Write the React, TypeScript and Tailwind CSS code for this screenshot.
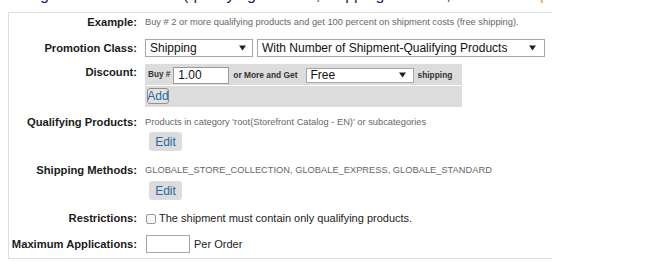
import React from "react";

function Arrow() {
  return (
    <svg width="7" height="6" viewBox="0 0 7 6" className="shrink-0">
      <path d="M0 0.5 L7 0.5 L3.5 5.5 Z" fill="#222" />
    </svg>
  );
}

function FakeSelect({ w, h, text, arrowPad }: { w: string; h: string; text: string; arrowPad: string }) {
  return (
    <div
      className={`${w} ${h} ${arrowPad} flex items-center justify-between border border-[#a6a6a6] bg-white pl-[4px] text-[12px] leading-none text-[#111]`}
    >
      <span>{text}</span>
      <Arrow />
    </div>
  );
}

function Label({ children, extra = "" }: { children: React.ReactNode; extra?: string }) {
  return (
    <div className={`w-[128px] shrink-0 text-right text-[11.2px] font-bold leading-[13px] text-[#1a1a1a] ${extra}`}>
      {children}
    </div>
  );
}

function EditButton() {
  return (
    <div className="ml-[4px] flex h-[19px] w-[33px] items-center justify-center rounded-[3px] bg-[#dcdcdc] text-[12px] leading-none text-[#2b69a3]">
      Edit
    </div>
  );
}

export default function App() {
  return (
    <div className="h-[271px] w-[652px] overflow-hidden bg-white font-['Liberation_Sans',Arial,sans-serif]">
      {/* clipped line from above */}
      <div className="h-[6px] overflow-hidden">
        <div className="-mt-[13px] flex whitespace-nowrap text-[16px] leading-[16px] text-[#1b2a66]">
          <span className="ml-[8px]">Using</span>
          <span className="ml-[134px]">(qualifying</span>
          <span className="ml-[60px]">, shipping</span>
          <span className="ml-[62px]">,</span>
          <span className="ml-[89px] text-[#e39a2d]">|</span>
        </div>
      </div>

      <div className="ml-[8px] mt-[6px] w-[544px] border-b border-l border-t border-[#dddddd] pb-[5px]">
        {/* Example */}
        <div className="flex h-[19px] items-center">
          <Label>Example:</Label>
          <div className="ml-[8px] whitespace-nowrap text-[9.3px] leading-none text-[#666]">
            Buy # 2 or more qualifying products and get 100 percent on shipment costs (free shipping).
          </div>
        </div>

        {/* Promotion Class */}
        <div className="mt-[7px] flex h-[18px] items-center">
          <Label>Promotion Class:</Label>
          <div className="ml-[8px] flex gap-[4px]">
            <FakeSelect w="w-[108px]" h="h-[18px]" text="Shipping" arrowPad="pr-[6px]" />
            <FakeSelect w="w-[288px]" h="h-[18px]" text="With Number of Shipment-Qualifying Products" arrowPad="pr-[8px]" />
          </div>
        </div>

        {/* Discount */}
        <div className="mt-[7px] flex">
          <Label extra="pt-[2px]">Discount:</Label>
          <div className="ml-[8px] w-[317px] bg-[#dcdcdc]">
            <div className="flex h-[22px] items-center border-b border-white pb-[1px] pt-[2px]">
              <span className="ml-[3px] text-[8.2px] font-bold text-[#333]">Buy #</span>
              <div className="ml-[3px] flex h-[17px] w-[56px] items-center border border-[#9a9a9a] bg-white pl-[4px] text-[12px] text-[#111]">
                1.00
              </div>
              <span className="ml-[4px] text-[8.4px] font-bold text-[#333]">or More and Get</span>
              <div className="ml-[8px]">
                <FakeSelect w="w-[108px]" h="h-[15px]" text="Free" arrowPad="pr-[7px]" />
              </div>
              <span className="ml-[4px] text-[8.4px] font-bold text-[#333]">shipping</span>
            </div>
            <div className="flex h-[21px] items-start pt-[2px]">
              <div className="ml-[2px] flex h-[16px] w-[22px] items-center justify-center rounded-[3px] border border-[#8f8f8f] bg-[#e2e2e2] text-[12px] leading-none text-[#2b69a3]">
                Add
              </div>
            </div>
          </div>
        </div>

        {/* Qualifying Products */}
        <div className="mt-[9px] flex h-[13px] items-center">
          <Label>Qualifying Products:</Label>
          <div className="ml-[8px] whitespace-nowrap text-[9.3px] leading-none text-[#666]">
            Products in category 'root(Storefront Catalog - EN)' or subcategories
          </div>
        </div>
        <div className="mt-[3px] flex">
          <div className="w-[136px] shrink-0" />
          <EditButton />
        </div>

        {/* Shipping Methods */}
        <div className="mt-[13px] flex h-[13px] items-center">
          <Label>Shipping Methods:</Label>
          <div className="ml-[8px] whitespace-nowrap text-[9.3px] leading-none text-[#666]">
            GLOBALE_STORE_COLLECTION, GLOBALE_EXPRESS, GLOBALE_STANDARD
          </div>
        </div>
        <div className="mt-[4px] flex">
          <div className="w-[136px] shrink-0" />
          <EditButton />
        </div>

        {/* Restrictions */}
        <div className="mt-[12px] flex h-[13px] items-center">
          <Label>Restrictions:</Label>
          <div className="ml-[9px] flex items-center">
            <div className="h-[10px] w-[10px] rounded-[2px] border border-[#9a9a9a] bg-[#f6f6f6]" />
            <span className="ml-[3px] whitespace-nowrap text-[11px] leading-none text-[#222]">
              The shipment must contain only qualifying products.
            </span>
          </div>
        </div>

        {/* Maximum Applications */}
        <div className="mt-[10px] flex h-[18px] items-center">
          <Label>Maximum Applications:</Label>
          <div className="ml-[9px] flex items-center">
            <div className="h-[18px] w-[44px] border border-[#a6a6a6] bg-white" />
            <span className="ml-[4px] text-[11px] leading-none text-[#222]">Per Order</span>
          </div>
        </div>
      </div>
    </div>
  );
}
